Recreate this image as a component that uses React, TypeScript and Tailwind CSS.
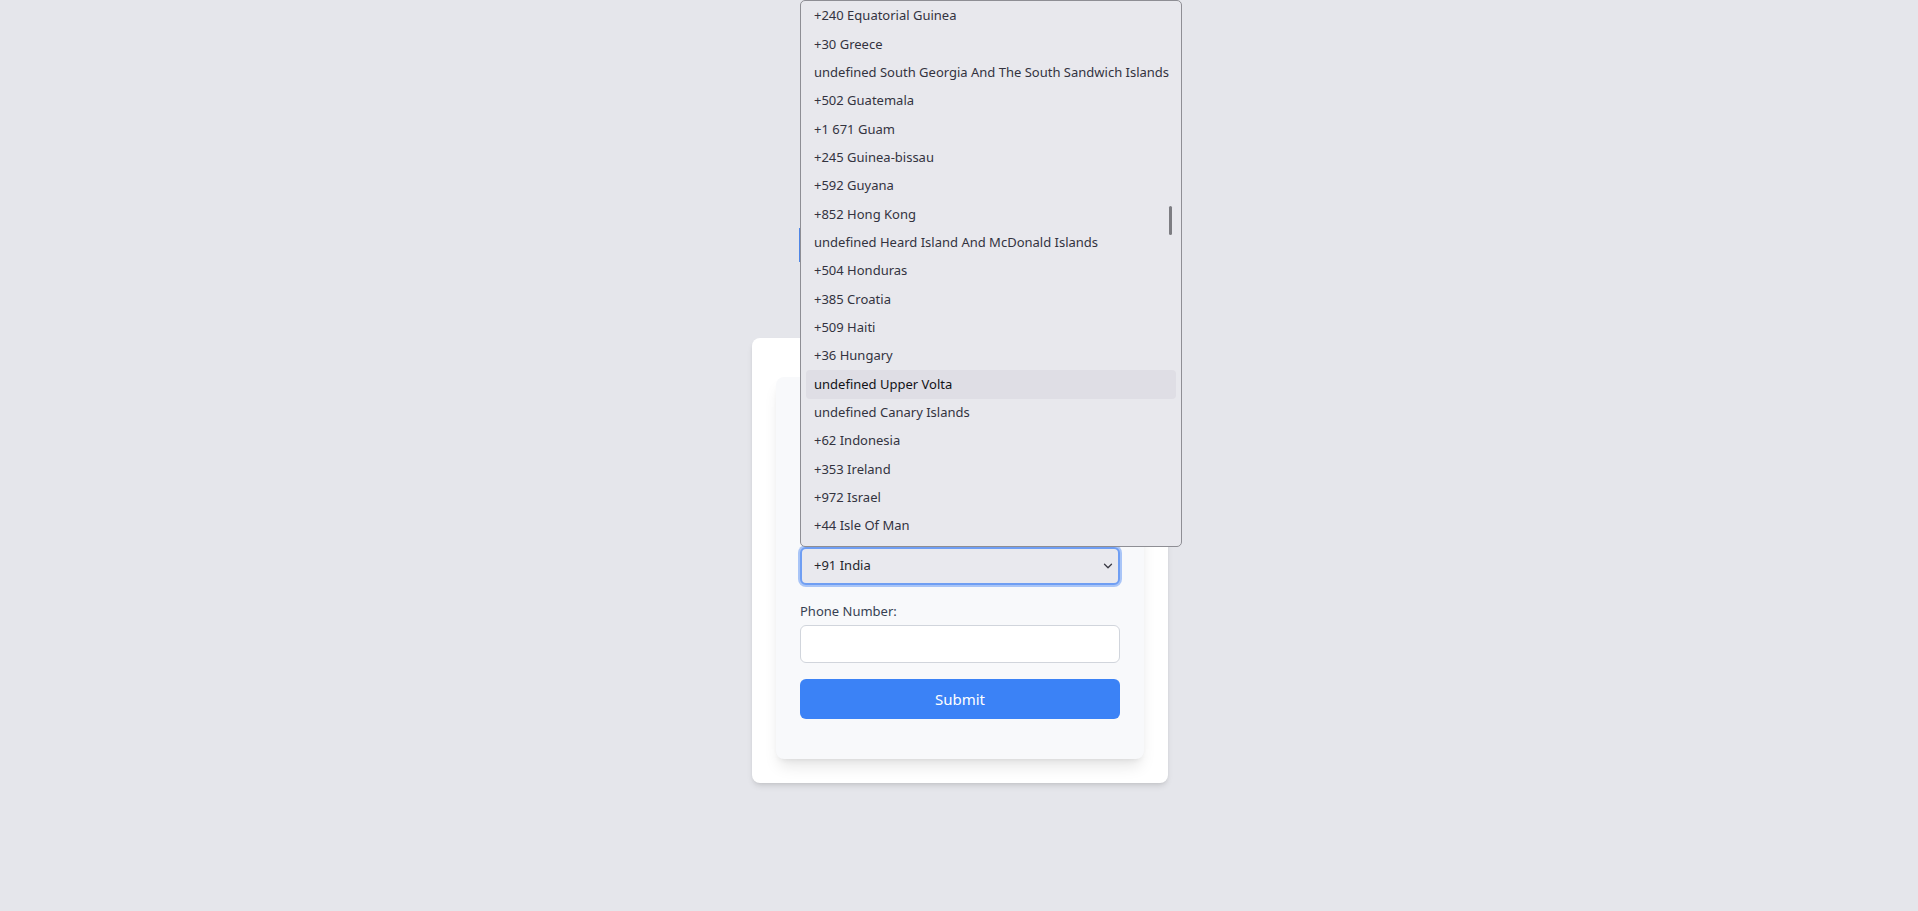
import { ChevronDown } from 'lucide-react';

const countries = [
    "+240 Equatorial Guinea",
    "+30 Greece",
    "undefined South Georgia And The South Sandwich Islands",
    "+502 Guatemala",
    "+1 671 Guam",
    "+245 Guinea-bissau",
    "+592 Guyana",
    "+852 Hong Kong",
    "undefined Heard Island And McDonald Islands",
    "+504 Honduras",
    "+385 Croatia",
    "+509 Haiti",
    "+36 Hungary",
    "undefined Upper Volta",
    "undefined Canary Islands",
    "+62 Indonesia",
    "+353 Ireland",
    "+972 Israel",
    "+44 Isle Of Man",
];

const highlighted = "undefined Upper Volta";

export default function App() {
    return (
        <main
            className="min-h-screen w-full bg-[#e5e6eb] flex justify-center items-start pt-[338px]"
            style={{ fontFamily: '"Noto Sans", "Liberation Sans", sans-serif' }}
        >
            <div className="w-[416px] ml-[2px] bg-white rounded-lg shadow-md px-6 pt-[39px] pb-6">
                <div className="bg-[#f8f9fb] rounded-lg shadow-lg px-6 pt-6 pb-10">
                    <div className="h-[146px] flex flex-col justify-end pb-1">
                        <h2 className="text-2xl font-semibold text-gray-800 text-center mb-auto">Phone Form</h2>
                        <label className="block text-[13px] leading-5 text-gray-700">Country Code:</label>
                    </div>

                    <div className="relative mb-4">
                        <div className="h-[38px] w-full rounded-md bg-[#e9e9ee] border-2 border-[#6f9ef3] ring-2 ring-[#a9c5f7] flex items-center justify-between pl-[12px] pr-[3px] text-[13px] text-[#26262c]">
                            <span>+91 India</span>
                            <ChevronDown size={14} strokeWidth={2.25} className="text-[#3a3a44]" />
                        </div>

                        {/* open native dropdown list */}
                        <div className="absolute left-0 bottom-full w-[382px] h-[547px] bg-[#e8e8ed] border border-[#8e8e94] rounded-[5px] pt-px px-[5px] z-10 overflow-hidden">
                            {countries.map((item) => (
                                <div
                                    key={item}
                                    className={
                                        item === highlighted
                                            ? "h-[28.33px] flex items-center px-2 rounded bg-[#dfdee5] text-[13px] text-[#121216] whitespace-nowrap"
                                            : "h-[28.33px] flex items-center px-2 text-[13px] text-[#33333f] whitespace-nowrap"
                                    }
                                >
                                    {item}
                                </div>
                            ))}
                            <div className="absolute right-[9px] top-[205px] w-[3px] h-[29px] bg-[#7d7d82] rounded-sm" />
                        </div>
                        <div className="absolute -left-px top-[-319px] w-px h-[34px] bg-[#4f86e6]" />
                    </div>

                    <label className="block text-[13px] leading-5 text-gray-700 mb-1">Phone Number:</label>
                    <input type="text" className="block w-full h-[38px] rounded-md border border-gray-300 bg-white mb-4" />

                    <button className="w-full h-10 rounded-md bg-[#3b82f6] text-white text-[15px]">Submit</button>
                </div>
            </div>
        </main>
    );
}
